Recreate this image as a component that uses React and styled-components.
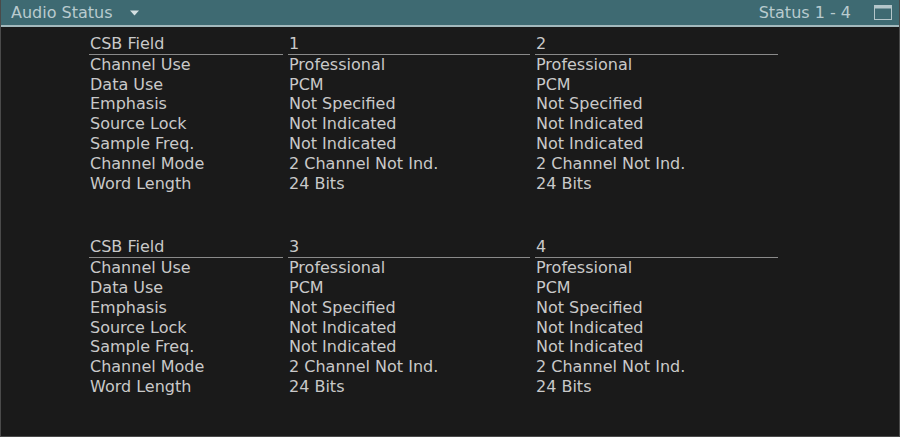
import React from "react";
import styled, { createGlobalStyle } from "styled-components";

const GlobalStyle = createGlobalStyle`
  html, body {
    margin: 0;
    padding: 0;
    background: #1a1a1a;
  }
  body {
    font-family: "DejaVu Sans", Verdana, sans-serif;
  }
`;

const Panel = styled.div`
  width: 900px;
  height: 437px;
  box-sizing: border-box;
  background: #1a1a1a;
  border-left: 1px solid #4a4a4a;
  border-right: 1px solid #4a4a4a;
  border-bottom: 1px solid #4a4a4a;
  display: flex;
  flex-direction: column;
`;

const TitleBar = styled.div`
  height: 25px;
  flex-shrink: 0;
  background: #3e6a72;
  border-bottom: 2px solid #a3b9bd;
  display: flex;
  align-items: center;
  padding: 0 7px 0 10px;
  color: #b9cbcf;
  font-size: 16px;
`;

const Title = styled.span`
  display: flex;
  align-items: center;
  gap: 17px;
`;

const Spacer = styled.div`
  flex: 1;
`;

const StatusLabel = styled.span`
  margin-right: 23px;
`;

const Body = styled.div`
  padding: 7px 0 0 88px;
  display: flex;
  flex-direction: column;
  gap: 44px;
  color: #c9c9c9;
  font-size: 16px;
`;

const Table = styled.div`
  display: grid;
  grid-template-columns: 194px 242px 243px;
  column-gap: 5px;
  line-height: 19.8px;
`;

const HeadCell = styled.div`
  padding-left: 1px;
  border-bottom: 1px solid #8a8a8a;
  white-space: nowrap;
`;

const Cell = styled.div`
  padding-left: 1px;
  white-space: nowrap;
`;

const Caret = () => (
  <svg width="9" height="6" viewBox="0 0 9 6">
    <path d="M0 0.5 L9 0.5 L4.5 5.5 Z" fill="#d4e0e2" />
  </svg>
);

const WindowIcon = () => (
  <svg width="18" height="15" viewBox="0 0 18 15">
    <rect x="0.5" y="0.5" width="17" height="14" fill="none" stroke="#b4c6ca" strokeWidth="1" />
    <rect x="0.5" y="0.5" width="17" height="3" fill="#b4c6ca" />
  </svg>
);

const fields = [
  "Channel Use",
  "Data Use",
  "Emphasis",
  "Source Lock",
  "Sample Freq.",
  "Channel Mode",
  "Word Length",
];

const values = [
  "Professional",
  "PCM",
  "Not Specified",
  "Not Indicated",
  "Not Indicated",
  "2 Channel Not Ind.",
  "24 Bits",
];

const StatusTable = ({ channels }) => (
  <Table>
    <HeadCell>CSB Field</HeadCell>
    {channels.map((c) => (
      <HeadCell key={c}>{c}</HeadCell>
    ))}
    {fields.map((f, i) => (
      <React.Fragment key={f}>
        <Cell>{f}</Cell>
        {channels.map((c) => (
          <Cell key={c}>{values[i]}</Cell>
        ))}
      </React.Fragment>
    ))}
  </Table>
);

export default function App() {
  return (
    <>
      <GlobalStyle />
      <Panel>
        <TitleBar>
          <Title>
            Audio Status <Caret />
          </Title>
          <Spacer />
          <StatusLabel>Status 1 - 4</StatusLabel>
          <WindowIcon />
        </TitleBar>
        <Body>
          <StatusTable channels={["1", "2"]} />
          <StatusTable channels={["3", "4"]} />
        </Body>
      </Panel>
    </>
  );
}
